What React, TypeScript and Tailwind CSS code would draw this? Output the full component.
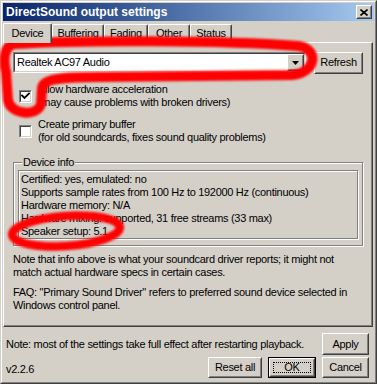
import React from "react";

const raised = "border border-t-white border-l-white border-r-[#404040] border-b-[#404040]";
const raisedInner = "border border-t-[#d4d0c8] border-l-[#d4d0c8] border-r-[#808080] border-b-[#808080]";
const sunken = "border border-t-[#808080] border-l-[#808080] border-r-white border-b-white";
const sunkenInner = "border border-t-[#404040] border-l-[#404040] border-r-[#d4d0c8] border-b-[#d4d0c8]";
const etched = "border border-[#808080] shadow-[inset_1px_1px_0_#fff,1px_1px_0_#fff]";

function Button({ className, children, isDefault }: { className: string; children: React.ReactNode; isDefault?: boolean }) {
  if (isDefault) {
    return (
      <div className={`flex border border-black ${className}`}>
        <div className={`flex-1 flex ${raised}`}>
          <div className={`flex-1 flex p-[2px] ${raisedInner}`}>
            <div className="flex-1 flex items-center justify-center border border-dotted border-black">{children}</div>
          </div>
        </div>
      </div>
    );
  }
  return (
    <div className={`flex ${raised} ${className}`}>
      <div className={`flex-1 flex items-center justify-center ${raisedInner}`}>{children}</div>
    </div>
  );
}

function Checkbox({ checked }: { checked?: boolean }) {
  return (
    <div className={`w-[13px] h-[13px] shrink-0 flex ${sunken}`}>
      <div className={`flex-1 bg-white ${sunkenInner}`}>
        {checked && (
          <svg width="9" height="9" viewBox="0 0 9 9" className="block">
            <path d="M1 3.5 L3.5 6 L8 1.5" stroke="#000" strokeWidth="1.8" fill="none" strokeLinecap="square" />
          </svg>
        )}
      </div>
    </div>
  );
}

function Tab({ label, selected, className }: { label: string; selected?: boolean; className: string }) {
  if (selected) {
    return (
      <div className={`relative z-10 -mb-px h-[20px] bg-[#d4d0c8] border border-b-0 border-t-white border-l-white border-r-[#404040] rounded-t-[2px] shadow-[inset_-1px_0_0_#808080] flex items-start justify-center pt-[3px] ${className}`}>
        {label}
      </div>
    );
  }
  return (
    <div className={`h-[18px] bg-[#d4d0c8] border border-b-0 border-t-white border-l-white border-r-[#404040] rounded-t-[2px] shadow-[inset_-1px_0_0_#808080] flex items-start justify-center pt-[2px] ${className}`}>
      {label}
    </div>
  );
}

export default function App() {
  return (
    <div className="w-[377px] h-[384px] relative overflow-hidden bg-[#d4d0c8] font-['Liberation_Sans',Arial,sans-serif] text-[11px] leading-[13px] tracking-[-0.3px] text-black">
      <div className="w-full h-full flex border border-t-[#d4d0c8] border-l-[#d4d0c8] border-r-[#404040] border-b-[#404040]">
        <div className="flex-1 flex flex-col p-px border border-t-white border-l-white border-r-[#808080] border-b-[#808080]">
          {/* Title bar */}
          <div className="h-[18px] shrink-0 flex items-center justify-between pl-[3px] pr-[2px] bg-gradient-to-r from-[#0a246a] to-[#a6caf0]">
            <span className="text-white font-bold text-[12px] tracking-normal">DirectSound output settings</span>
            <div className={`w-[16px] h-[14px] flex ${raised}`}>
              <div className={`flex-1 flex items-center justify-center bg-[#d4d0c8] ${raisedInner}`}>
                <svg width="8" height="7" viewBox="0 0 8 7">
                  <path d="M0.5 0.5 L7.5 6.5 M7.5 0.5 L0.5 6.5" stroke="#000" strokeWidth="1.6" />
                </svg>
              </div>
            </div>
          </div>

          {/* Tabs */}
          <div className="h-[21px] shrink-0 flex items-end">
            <Tab label="Device" selected className="w-[49px]" />
            <Tab label="Buffering" className="w-[52px]" />
            <Tab label="Fading" className="w-[44px]" />
            <Tab label="Other" className="w-[42px]" />
            <Tab label="Status" className="w-[42px]" />
          </div>

          {/* Panel */}
          <div className="h-[285px] shrink-0 mr-px border border-t-white border-l-white border-r-[#404040] border-b-[#404040] shadow-[inset_-1px_-1px_0_#808080] flex flex-col pt-[9px] pl-[9px]">
            <div className="flex items-center h-[21px]">
              <div className={`w-[293px] h-[21px] flex ${sunken}`}>
                <div className={`flex-1 flex items-center bg-white ${sunkenInner}`}>
                  <span className="flex-1 pl-[2px]">Realtek AC97 Audio</span>
                  <div className={`w-[17px] h-[17px] flex ${raised}`}>
                    <div className={`flex-1 flex items-center justify-center bg-[#d4d0c8] ${raisedInner}`}>
                      <svg width="7" height="4" viewBox="0 0 7 4">
                        <path d="M0 0 H7 L3.5 4 Z" fill="#000" />
                      </svg>
                    </div>
                  </div>
                </div>
              </div>
              <Button className="ml-[8px] w-[49px] h-[22px]">Refresh</Button>
            </div>

            <div className="mt-[10px] ml-[6px] flex items-center gap-[6px]">
              <Checkbox checked />
              <div>
                <div>Allow hardware acceleration</div>
                <div>(may cause problems with broken drivers)</div>
              </div>
            </div>

            <div className="mt-[9px] ml-[6px] flex items-center gap-[6px]">
              <Checkbox />
              <div>
                <div>Create primary buffer</div>
                <div>(for old soundcards, fixes sound quality problems)</div>
              </div>
            </div>

            <div className={`relative mt-[18px] w-[350px] h-[84px] ${etched}`}>
              <span className="absolute -top-[7px] left-[8px] px-[1px] bg-[#d4d0c8]">Device info</span>
              <div className={`mt-[7px] ml-[4px] w-[340px] h-[69px] pt-[2px] pl-[2px] ${etched}`}>
                <div>Certified: yes, emulated: no</div>
                <div>Supports sample rates from 100 Hz to 192000 Hz (continuous)</div>
                <div>Hardware memory: N/A</div>
                <div>Hardware mixing: supported, 31 free streams (33 max)</div>
                <div>Speaker setup: 5.1</div>
              </div>
            </div>

            <div className="mt-[7px]">
              <div>Note that info above is what your soundcard driver reports; it might not</div>
              <div>match actual hardware specs in certain cases.</div>
            </div>
            <div className="mt-[7px]">
              <div>FAQ: "Primary Sound Driver" refers to preferred sound device selected in</div>
              <div>Windows control panel.</div>
            </div>
          </div>

          {/* Bottom rows */}
          <div className="mt-[6px] flex items-center justify-between pl-[3px] pr-[5px]">
            <span>Note: most of the settings take full effect after restarting playback.</span>
            <Button className="w-[47px] h-[22px]">Apply</Button>
          </div>
          <div className="mt-[2px] flex items-end justify-between pl-[3px] pr-[5px]">
            <span className="mb-[2px]">v2.2.6</span>
            <div className="flex gap-[6px]">
              <Button className="w-[54px] h-[21px]">Reset all</Button>
              <Button className="w-[48px] h-[21px]" isDefault>OK</Button>
              <Button className="w-[47px] h-[21px]">Cancel</Button>
            </div>
          </div>
        </div>
      </div>

      {/* Red hand-drawn annotations */}
      <svg className="absolute inset-0 pointer-events-none" width="377" height="384" viewBox="0 0 377 384">
        <defs>
          <filter id="soft" x="-10%" y="-10%" width="120%" height="120%">
            <feGaussianBlur stdDeviation="1.3" />
          </filter>
        </defs>
        <g filter="url(#soft)" fill="none" stroke="#ff0000" strokeLinecap="round" strokeLinejoin="round">
          <path
            d="M298 46 C 220 40, 80 40, 14 44 C 4 46, 3 60, 6 72 L 8 100 C 10 115, 38 117, 41 104 L 42 88 C 43 79, 60 77, 100 77 L 292 75 C 317 73, 319 48, 298 46 Z"
            strokeWidth="10"
          />
          <ellipse cx="66" cy="231" rx="54" ry="15" transform="rotate(-4 66 231)" strokeWidth="8.5" />
        </g>
      </svg>
    </div>
  );
}
